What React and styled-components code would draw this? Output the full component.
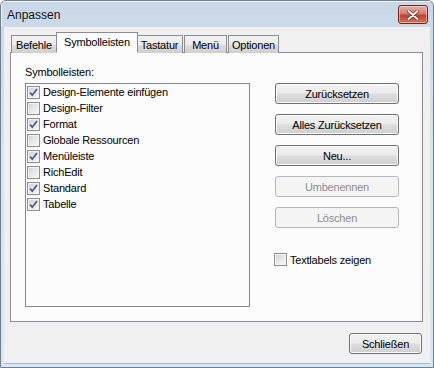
import React from 'react';
import styled, { createGlobalStyle } from 'styled-components';

const GlobalStyle = createGlobalStyle`
  html, body {
    margin: 0;
    padding: 0;
    background: #ffffff;
  }
  * {
    box-sizing: border-box;
  }
`;

const Window = styled.div`
  width: 434px;
  height: 368px;
  display: flex;
  flex-direction: column;
  border: 1px solid #6f7f92;
  border-radius: 6px 6px 0 0;
  background: linear-gradient(180deg, #c9d7e7 0%, #d9e3ef 40%, #dbe5f0 100%);
  font-family: 'Liberation Sans', Arial, sans-serif;
  font-size: 11px;
  letter-spacing: -0.2px;
  color: #000;
  overflow: hidden;
`;

const TitleBar = styled.div`
  height: 26px;
  flex: none;
  display: flex;
  align-items: center;
  justify-content: space-between;
  padding: 0 5px 0 6px;
  box-shadow: inset 1px 1px 0 #eef3f9;
`;

const Title = styled.span`
  font-size: 12px;
  letter-spacing: 0;
  color: #111;
  margin-top: 2px;
`;

const CloseButton = styled.div`
  width: 30px;
  height: 19px;
  margin-top: 1px;
  border: 1px solid #6b2a22;
  border-radius: 3px;
  background: linear-gradient(180deg, #e8b1a5 0%, #d77a68 45%, #c0412e 55%, #d0735c 100%);
  box-shadow: inset 0 0 0 1px rgba(255, 220, 210, 0.55);
  display: flex;
  align-items: center;
  justify-content: center;
`;

const Client = styled.div`
  flex: 1;
  margin: 0 3px 3px 3px;
  background: #f0f0f0;
  padding: 5px 7px 9px 6px;
  display: flex;
  flex-direction: column;
  border-bottom: 1px solid #8fc1e6;
`;

const TabRow = styled.div`
  display: flex;
  align-items: flex-end;
  height: 21px;
  padding-left: 1px;
  position: relative;
  z-index: 1;
`;

const Tab = styled.div`
  height: ${(p) => (p.$active ? '21px' : '18px')};
  width: ${(p) => p.$w}px;
  margin: 0 ${(p) => (p.$active ? '-2px' : '1px')} 0 ${(p) => (p.$active ? '-2px' : '0')};
  border: 1px solid #898c95;
  border-bottom: ${(p) => (p.$active ? '1px solid #fcfcfc' : 'none')};
  background: ${(p) =>
    p.$active
      ? '#fcfcfc'
      : 'linear-gradient(180deg, #f2f2f2 0%, #ebebeb 50%, #dddddd 51%, #cfcfcf 100%)'};
  display: flex;
  align-items: ${(p) => (p.$active ? 'flex-start' : 'center')};
  justify-content: center;
  padding-top: ${(p) => (p.$active ? '3px' : '0')};
  position: relative;
  z-index: ${(p) => (p.$active ? 2 : 1)};
  font-size: 11px;
`;

const Panel = styled.div`
  height: 270px;
  flex: none;
  margin-top: -1px;
  border: 1px solid #898c95;
  background: #fcfcfc;
  display: flex;
  padding: 12px 0 0 14px;
  gap: 25px;
`;

const LeftCol = styled.div`
  display: flex;
  flex-direction: column;
`;

const Label = styled.div`
  height: 14px;
  line-height: 14px;
`;

const ListBox = styled.div`
  margin-top: 4px;
  width: 225px;
  height: 224px;
  border: 1px solid #828790;
  background: #fcfcfc;
  padding: 0 0 0 1px;
`;

const Row = styled.div`
  height: 16px;
  display: flex;
  align-items: center;
  gap: 3px;
`;

const Box = styled.span`
  width: 13px;
  height: 13px;
  flex: none;
  border: 1px solid #8f8f8f;
  background: linear-gradient(135deg, #cfd1d4 0%, #e6e7e8 50%, #f6f6f6 100%);
  box-shadow: inset 0 0 0 1px #f4f4f4;
  display: flex;
  align-items: center;
  justify-content: center;
`;

const RightCol = styled.div`
  display: flex;
  flex-direction: column;
  padding-top: 18px;
`;

const Button = styled.div`
  width: ${(p) => p.$w || 124}px;
  height: 21px;
  margin-bottom: 10px;
  border: 1px solid ${(p) => (p.$disabled ? '#b5b8bb' : '#707070')};
  border-radius: 3px;
  background: ${(p) =>
    p.$disabled
      ? '#f4f4f4'
      : 'linear-gradient(180deg, #f2f2f2 0%, #ebebeb 48%, #dddddd 52%, #cfcfcf 100%)'};
  box-shadow: inset 0 0 0 1px ${(p) => (p.$disabled ? '#f4f4f4' : '#fafafa')};
  color: ${(p) => (p.$disabled ? '#8d8d8d' : '#000')};
  display: flex;
  align-items: center;
  justify-content: center;
  font-size: 11px;
`;

const CheckOption = styled.div`
  display: flex;
  align-items: center;
  gap: 3px;
  margin-top: 15px;
  margin-left: -1px;
`;

const Footer = styled.div`
  flex: 1;
  display: flex;
  justify-content: flex-end;
  align-items: flex-end;
  padding-right: 1px;

  ${Button} {
    margin-bottom: 0;
  }
`;

const Check = () => (
  <svg width="11" height="11" viewBox="0 0 11 11">
    <path d="M2 5.5 L4.3 8.2 L9 2" fill="none" stroke="#44598a" strokeWidth="1.7" />
  </svg>
);

function CheckBox({ checked }) {
  return <Box>{checked && <Check />}</Box>;
}

const toolbars = [
  ['Design-Elemente einfügen', true],
  ['Design-Filter', false],
  ['Format', true],
  ['Globale Ressourcen', false],
  ['Menüleiste', true],
  ['RichEdit', false],
  ['Standard', true],
  ['Tabelle', true],
];

const tabs = [
  ['Befehle', 46],
  ['Symbolleisten', 82, true],
  ['Tastatur', 47],
  ['Menü', 43],
  ['Optionen', 51],
];

export default function App() {
  return (
    <>
      <GlobalStyle />
      <Window>
        <TitleBar>
          <Title>Anpassen</Title>
          <CloseButton>
            <svg width="12" height="10" viewBox="0 0 12 10">
              <path d="M1.5 1 L10.5 9 M10.5 1 L1.5 9" stroke="#5a1d16" strokeWidth="3.2" strokeLinecap="round" />
              <path d="M1.5 1 L10.5 9 M10.5 1 L1.5 9" stroke="#ffffff" strokeWidth="2" strokeLinecap="round" />
            </svg>
          </CloseButton>
        </TitleBar>
        <Client>
          <TabRow>
            {tabs.map(([name, w, active]) => (
              <Tab key={name} $w={w} $active={active}>
                {name}
              </Tab>
            ))}
          </TabRow>
          <Panel>
            <LeftCol>
              <Label>Symbolleisten:</Label>
              <ListBox>
                {toolbars.map(([name, checked]) => (
                  <Row key={name}>
                    <CheckBox checked={checked} />
                    {name}
                  </Row>
                ))}
              </ListBox>
            </LeftCol>
            <RightCol>
              <Button>Zurücksetzen</Button>
              <Button>Alles Zurücksetzen</Button>
              <Button>Neu...</Button>
              <Button $disabled>Umbenennen</Button>
              <Button $disabled>Löschen</Button>
              <CheckOption>
                <CheckBox />
                Textlabels zeigen
              </CheckOption>
            </RightCol>
          </Panel>
          <Footer>
            <Button $w={73}>Schließen</Button>
          </Footer>
        </Client>
      </Window>
    </>
  );
}
